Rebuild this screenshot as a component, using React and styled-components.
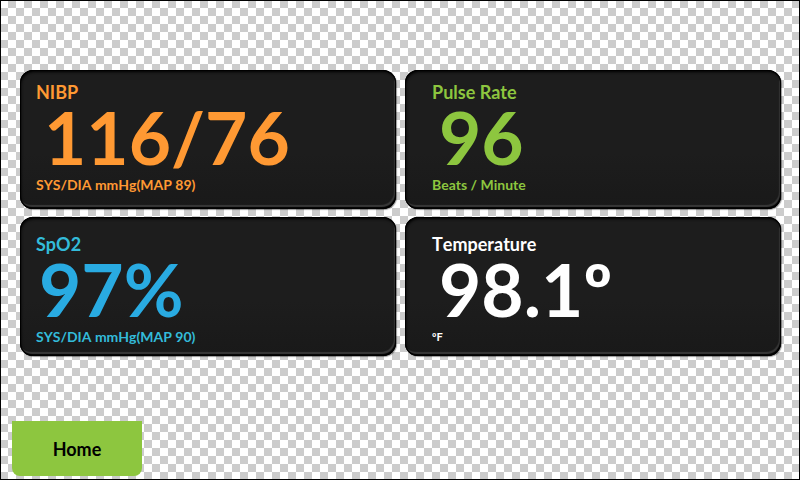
import React from "react";
import styled, { createGlobalStyle } from "styled-components";

const GlobalStyle = createGlobalStyle`
  *, *::before, *::after { box-sizing: border-box; }
  html, body { margin: 0; }
  body { font-family: Lato, "Liberation Sans", sans-serif; font-kerning: none; }
`;

const Screen = styled.div`
  display: flex;
  flex-direction: column;
  justify-content: space-between;
  min-height: 100vh;
  padding: 69px 18px 3px 19px;
  border: 1px solid #000;
  background: repeating-conic-gradient(#ccc 0 25%, #fff 0 50%) 0 0 / 16px 16px border-box;
`;

const Vitals = styled.main`
  display: grid;
  grid-template-columns: 1fr 1fr;
  gap: 8px 9px;
`;

const Panel = styled.section`
  min-height: 139px;
  padding: ${(p) => p.$top}px 16px 0 ${(p) => p.$left}px;
  border-radius: 13px;
  color: ${(p) => p.$color};
  background: linear-gradient(#1d1d1d 60%, #191919);
  box-shadow:
    inset 0 0 0 1px #000,
    inset -1px -2px 1px #000,
    inset -2px -4px 1px #3a3a3a,
    inset 1px 2px 3px #000,
    1px 1px 1px rgba(0, 0, 0, 0.4);
`;

const Label = styled.h2`
  margin: 0;
  font-size: 18px;
  line-height: 24px;
  font-weight: 700;
`;

const Value = styled.p`
  margin: 0;
  padding-left: ${(p) => p.$indent}px;
  font-size: 73px;
  line-height: 66px;
  font-weight: 700;
  white-space: nowrap;
  color: ${(p) => p.$color};
`;

const Caption = styled.p`
  margin: 5px 0 0;
  font-size: ${(p) => (p.$small ? 11 : 14)}px;
  line-height: 20px;
  font-weight: 700;
`;

const HomeButton = styled.button`
  align-self: flex-start;
  width: 130px;
  height: 55px;
  margin-left: -8px;
  padding: 0;
  border: 0;
  border-radius: 0 0 8px 8px;
  background: #8dc63f;
  color: #000;
  font: 700 18px/24px Lato, "Liberation Sans", sans-serif;
  cursor: pointer;
`;

const readings = [
  { label: "NIBP", value: "116/76", caption: "SYS/DIA mmHg(MAP 89)", color: "#ff9933", top: 10, left: 16, indent: 8 },
  { label: "Pulse Rate", value: "96", caption: "Beats / Minute", color: "#8dc63f", top: 10, left: 27, indent: 7 },
  { label: "SpO2", value: "97%", caption: "SYS/DIA mmHg(MAP 90)", color: "#33bbd9", valueColor: "#29abe2", top: 15, left: 16, indent: 3 },
  { label: "Temperature", value: "98.1º", caption: "ºF", color: "#ffffff", top: 15, left: 27, indent: 7, small: true },
];

export default function App() {
  return (
    <>
      <GlobalStyle />
      <Screen>
        <Vitals>
          {readings.map((r) => (
            <Panel key={r.label} $color={r.color} $top={r.top} $left={r.left}>
              <Label>{r.label}</Label>
              <Value $indent={r.indent} $color={r.valueColor || r.color}>
                {r.value}
              </Value>
              <Caption $small={r.small}>{r.caption}</Caption>
            </Panel>
          ))}
        </Vitals>
        <HomeButton type="button">Home</HomeButton>
      </Screen>
    </>
  );
}
